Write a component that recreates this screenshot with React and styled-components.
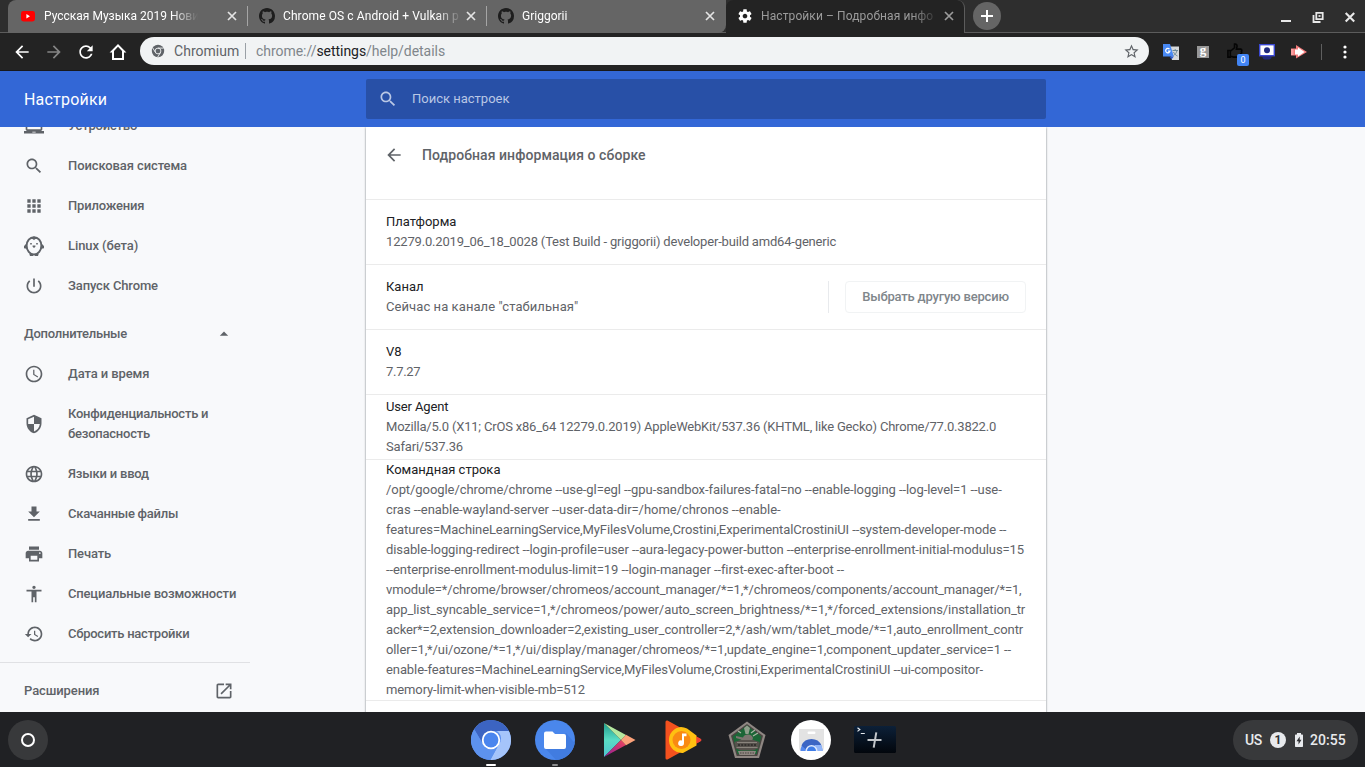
import React from 'react';
import styled, { createGlobalStyle, css } from 'styled-components';

const Global = createGlobalStyle`
  * { box-sizing: border-box; }
  html, body { margin: 0; padding: 0; }
  body { font-family: Roboto, "Noto Sans", sans-serif; font-size: 13px; overflow: hidden; }
  svg { display: block; flex: none; }
`;

const Screen = styled.div`
  width: 1365px;
  height: 767px;
  display: flex;
  flex-direction: column;
  overflow: hidden;
  background: #f8f9fb;
`;

/* ---------- tab strip ---------- */
const TabStrip = styled.div`
  height: 33px;
  flex: none;
  display: flex;
  background: #2e2e2e;
  padding-left: 8px;
  background-image: linear-gradient(#5c5c5c, #5c5c5c);
  background-size: 100% 1px;
  background-repeat: no-repeat;
  background-position: 0 32px;
`;

const InactiveTabs = styled.div`
  display: flex;
  width: 718px;
  height: 33px;
  background: #656565;
  border-radius: 8px 0 8px 0;
`;

const Tab = styled.div`
  width: ${p => (p.$first ? 240 : p.$last ? 238 : 239)}px;
  height: 32px;
  display: flex;
  align-items: center;
  padding: 0 10px 0 ${p => (p.$first ? 12 : 11)}px;
  ${p => p.$divided && css`
    height: 20px;
    margin-top: 6px;
    border-right: 1px solid #a5a5a5;
  `}
  ${p => p.$active && css`
    width: 239px;
    height: 33px;
    padding: 0 10px 1px 11px;
    background: #232323;
    border-right: 1px solid #5c5c5c;
    border-radius: 8px 8px 0 0;
  `}
`;

const TabTitle = styled.div`
  flex: 1;
  margin-left: 8px;
  font-size: 12px;
  line-height: 16px;
  white-space: nowrap;
  overflow: hidden;
  color: ${p => (p.$active ? '#9b9b9b' : '#ffffff')};
  letter-spacing: ${p => p.$track || 0}px;
  mask-image: linear-gradient(90deg, #000 ${p => p.$fade}px, transparent ${p => p.$fade + 26}px);
`;

const NewTab = styled.div`
  width: 28px;
  height: 28px;
  margin: 2px 0 0 8px;
  border-radius: 50%;
  background: #656565;
  display: flex;
  align-items: center;
  justify-content: center;
`;

const WindowControls = styled.div`
  margin-left: auto;
  display: flex;
  align-items: center;
  gap: 16px;
  padding: 1px 7px 0 0;
  height: 32px;
`;

/* ---------- toolbar ---------- */
const Toolbar = styled.div`
  height: 38px;
  flex: none;
  background: #232323;
  border-bottom: 1px solid #18181c;
  display: flex;
  align-items: center;
  padding-left: 12px;
`;

const NavButtons = styled.div`
  display: flex;
  gap: 12px;
  width: 128px;
`;

const Omnibox = styled.div`
  width: 1009px;
  height: 28px;
  margin-top: -1px;
  border-radius: 14px;
  background: #f1f3f4;
  display: flex;
  align-items: center;
  padding: 0 9px 0 11px;
  font-size: 14px;
  color: #80868b;
`;

const Origin = styled.span`
  width: 65px;
  color: #5f6368;
  margin-left: 9px;
  letter-spacing: 0.03px;
`;

const OriginRule = styled.span`
  width: 1px;
  height: 16px;
  background: #9aa0a6;
  margin: 0 10px 0 6px;
`;

const Address = styled.span`
  flex: 1;
  letter-spacing: -0.04px;
  b { font-weight: 400; color: #202124; }
`;

const Extensions = styled.div`
  display: flex;
  align-items: center;
  gap: 16px;
  padding-left: 14px;
  height: 28px;
`;

const ExtensionG = styled.span`
  width: 12px;
  height: 12px;
  margin: 0 2px;
  background: #979797;
  color: #fff;
  font: bold 13px/8px "Liberation Serif", serif;
  text-align: center;
`;

const ThumbWrap = styled.span`
  position: relative;
  width: 16px;
  height: 18px;
`;

const CountBadge = styled.span`
  position: absolute;
  left: 10px;
  top: 11px;
  width: 12px;
  height: 12px;
  border-radius: 2px;
  background: #4285f4;
  color: #fff;
  font-size: 9px;
  line-height: 12px;
  text-align: center;
`;

const ToolbarRule = styled.span`
  width: 1px;
  height: 16px;
  margin: 0 5px 0 -2px;
  background: #5f5f5f;
`;

/* ---------- settings header ---------- */
const Header = styled.header`
  height: 56px;
  flex: none;
  background: #3367d6;
  display: flex;
  align-items: center;
`;

const HeaderTitle = styled.h1`
  margin: 0;
  width: 366px;
  padding-left: 24px;
  font-size: 16px;
  font-weight: 400;
  letter-spacing: 0.2px;
  color: #fff;
`;

const SearchField = styled.div`
  width: 680px;
  height: 40px;
  border-radius: 2px;
  background: #2850a7;
  display: flex;
  align-items: center;
  gap: 14px;
  padding-left: 12px;
  color: #b9c7e5;
`;

const Placeholder = styled.span`
  padding-bottom: 2px;
`;

/* ---------- body ---------- */
const Body = styled.div`
  flex: 1;
  min-height: 0;
  display: flex;
  overflow: hidden;
`;

const Sidebar = styled.nav`
  width: 366px;
  margin-top: -21px;
  color: #5f6368;
  font-weight: 500;
`;

const NavItem = styled.div`
  display: flex;
  align-items: center;
  width: 250px;
  height: ${p => (p.$tall ? 60 : 40)}px;
  padding-left: 24px;
  gap: 24px;
  line-height: 20px;
  white-space: pre;
  letter-spacing: ${p => p.$track}px;
`;

const NavGroup = styled.div`
  display: flex;
  align-items: center;
  justify-content: space-between;
  width: 250px;
  height: 40px;
  margin-top: 8px;
  padding: 0 16px 0 24px;
  line-height: 20px;
  letter-spacing: ${p => p.$track}px;
`;

const NavRule = styled.div`
  width: 250px;
  height: 1px;
  margin-top: 8px;
  background: #e0e1e4;
`;

const Card = styled.main`
  width: 680px;
  height: 600px;
  background: #fff;
  box-shadow: 0 1px 2px rgba(60, 64, 67, 0.5), 0 0 2px rgba(60, 64, 67, 0.25);
`;

const CardHead = styled.div`
  height: 72px;
  display: flex;
  align-items: flex-start;
  padding: 18px 0 0 18px;
  gap: 18px;
  color: #5f6368;
`;

const CardTitle = styled.h2`
  margin: 0;
  font-size: 14px;
  line-height: 21px;
  font-weight: 500;
  letter-spacing: 0.07px;
`;

const Row = styled.section`
  min-height: ${p => (p.$open ? 0 : 65)}px;
  border-top: 1px solid #ebebeb;
  padding: 0 20px;
  display: flex;
  align-items: center;
  line-height: 20px;
  color: #202124;
`;

const RowText = styled.div`
  flex: 1;
`;

const RowTitle = styled.div`
  letter-spacing: ${p => p.$track || 0}px;
`;

const Secondary = styled.div`
  color: #5f6368;
  white-space: pre;
`;

const Line = styled.div`
  letter-spacing: ${p => p.$track || 0}px;
`;

const ButtonRule = styled.div`
  width: 1px;
  height: 32px;
  background: #e8eaed;
  margin-right: 16px;
`;

const OutlineButton = styled.button`
  width: 181px;
  height: 32px;
  padding: 0 0 2px;
  border: 1px solid #f1f3f4;
  border-radius: 4px;
  background: #fff;
  color: #80868b;
  font: 500 13px Roboto, sans-serif;
  letter-spacing: -0.19px;
`;

/* ---------- shelf ---------- */
const Shelf = styled.footer`
  height: 55px;
  flex: none;
  background: #202124;
  display: flex;
  align-items: flex-start;
  justify-content: space-between;
  padding: 8px 7px 0 8px;
`;

const Launcher = styled.div`
  width: 40px;
  height: 40px;
  border-radius: 50%;
  background: #38393b;
  display: flex;
  align-items: center;
  justify-content: center;
`;

const Ring = styled.span`
  width: 14px;
  height: 14px;
  border: 2px solid #fff;
  border-radius: 50%;
`;

const ShelfApps = styled.div`
  display: flex;
  gap: 20px;
  margin-left: 84px;
`;

const ShelfApp = styled.div`
  width: 44px;
  height: 47px;
  display: flex;
  flex-direction: column;
  align-items: center;
  justify-content: space-between;
`;

const Indicator = styled.span`
  width: ${p => p.$w}px;
  height: 2px;
  margin-bottom: 1px;
  border-radius: 1px;
  background: ${p => p.$c};
`;

const Tray = styled.div`
  width: 125px;
  height: 40px;
  border-radius: 20px;
  background: #38393b;
  color: #e8eaed;
  display: flex;
  align-items: center;
  padding-left: 12px;
  font-size: 14px;
`;

const Locale = styled.span`
  width: 17px;
  font-weight: 500;
  letter-spacing: -0.5px;
`;

const TrayCount = styled.span`
  width: 16px;
  height: 16px;
  margin: 0 9px 0 8px;
  border-radius: 50%;
  background: #e8eaed;
  color: #303134;
  font-size: 12px;
  line-height: 16px;
  font-weight: 700;
  text-align: center;
`;

const Clock = styled.span`
  margin-left: 7px;
  font-weight: 500;
  letter-spacing: 0.05px;
`;

/* ---------- icons ---------- */
const Icon = ({ d, size = 20, box = 24, fill = 'currentColor' }) => (
  <svg width={size} height={size} viewBox={`0 0 ${box} ${box}`} fill={fill}>
    <path d={d} fillRule="evenodd" />
  </svg>
);

const P = {
  laptop: 'M20 18c1.1 0 1.99-.9 1.99-2L22 5c0-1.1-.9-2-2-2H4c-1.1 0-2 .9-2 2v11c0 1.1.9 2 2 2H0v3h24v-3h-4zM4 5h16v11H4V5zm6 14h4v.8h-4z',
  search: 'M15.5 14h-.79l-.28-.27C15.41 12.59 16 11.11 16 9.5 16 5.91 13.09 3 9.5 3S3 5.91 3 9.5 5.91 16 9.5 16c1.61 0 3.09-.59 4.23-1.57l.27.28v.79l5 4.99L20.49 19l-4.99-5zm-6 0C7.01 14 5 11.99 5 9.5S7.01 5 9.5 5 14 7.01 14 9.5 11.99 14 9.5 14z',
  apps: 'M4 8h4V4H4v4zm6 12h4v-4h-4v4zm-6 0h4v-4H4v4zm0-6h4v-4H4v4zm6 0h4v-4h-4v4zm6-10v4h4V4h-4zm-6 4h4V4h-4v4zm6 6h4v-4h-4v4zm0 6h4v-4h-4v4z',
  power: 'M13 3h-2v10h2V3zm4.83 2.17l-1.42 1.42C17.99 7.86 19 9.81 19 12c0 3.87-3.13 7-7 7s-7-3.13-7-7c0-2.19 1.01-4.14 2.58-5.42L6.17 5.17C4.23 6.82 3 9.26 3 12c0 4.97 4.03 9 9 9s9-4.03 9-9c0-2.74-1.23-5.18-3.17-6.83z',
  clock: 'M11.99 2C6.47 2 2 6.48 2 12s4.47 10 9.99 10C17.52 22 22 17.52 22 12S17.52 2 11.99 2zM12 20c-4.42 0-8-3.58-8-8s3.58-8 8-8 8 3.58 8 8-3.58 8-8 8zM12.5 7H11v6l5.25 3.15.75-1.23-4.5-2.67V7z',
  shield: 'M12 1L3 5v6c0 5.55 3.84 10.74 9 12 5.16-1.26 9-6.45 9-12V5l-9-4zm0 10.99h7c-.53 4.12-3.28 7.79-7 8.94V12H5V6.3l7-3.11v8.8z',
  globe: 'M11.99 2C6.47 2 2 6.48 2 12s4.47 10 9.99 10C17.52 22 22 17.52 22 12S17.52 2 11.99 2zm6.93 6h-2.95c-.32-1.25-.78-2.45-1.38-3.56 1.84.63 3.37 1.91 4.33 3.56zM12 4.04c.83 1.2 1.48 2.53 1.91 3.96h-3.82c.43-1.43 1.08-2.76 1.91-3.96zM4.26 14C4.1 13.36 4 12.69 4 12s.1-1.36.26-2h3.38c-.08.66-.14 1.32-.14 2 0 .68.06 1.34.14 2H4.26zm.82 2h2.95c.32 1.25.78 2.45 1.38 3.56-1.84-.63-3.37-1.9-4.33-3.56zm2.95-8H5.08c.96-1.66 2.49-2.93 4.33-3.56C8.81 5.55 8.35 6.75 8.03 8zM12 19.96c-.83-1.2-1.48-2.53-1.91-3.96h3.82c-.43 1.43-1.08 2.76-1.91 3.96zM14.34 14H9.66c-.09-.66-.16-1.32-.16-2 0-.68.07-1.35.16-2h4.68c.09.65.16 1.32.16 2 0 .68-.07 1.34-.16 2zm.25 5.56c.6-1.11 1.06-2.31 1.38-3.56h2.95c-.96 1.65-2.49 2.93-4.33 3.56zM16.36 14c.08-.66.14-1.32.14-2 0-.68-.06-1.34-.14-2h3.38c.16.64.26 1.31.26 2s-.1 1.36-.26 2h-3.38z',
  download: 'M19 9h-4V3H9v6H5l7 7 7-7zM5 18v2h14v-2H5z',
  print: 'M19 8H5c-1.66 0-3 1.34-3 3v6h4v4h12v-4h4v-6c0-1.66-1.34-3-3-3zm-3 11H8v-5h8v5zm3-7c-.55 0-1-.45-1-1s.45-1 1-1 1 .45 1 1-.45 1-1 1zm-1-9H6v4h12V3z',
  accessibility: 'M12 2c1.1 0 2 .9 2 2s-.9 2-2 2-2-.9-2-2 .9-2 2-2zm9 7h-6v13h-2v-6h-2v6H9V9H3V7h18v2z',
  restore: 'M13 3c-4.97 0-9 4.03-9 9H1l3.89 3.89.07.14L9 12H6c0-3.87 3.13-7 7-7s7 3.13 7 7-3.13 7-7 7c-1.93 0-3.68-.79-4.94-2.06l-1.42 1.42C8.27 19.99 10.51 21 13 21c4.97 0 9-4.03 9-9s-4.03-9-9-9zm-1 5v5l4.28 2.54.72-1.21-3.5-2.08V8H12z',
  open: 'M19 19H5V5h7V3H5c-1.11 0-2 .9-2 2v14c0 1.1.89 2 2 2h14c1.1 0 2-.9 2-2v-7h-2v7zM14 3v2h3.59l-9.83 9.83 1.41 1.41L19 6.41V10h2V3h-7z',
  back: 'M20 11H7.83l5.59-5.59L12 4l-8 8 8 8 1.41-1.41L7.83 13H20v-2z',
  forward: 'M12 4l-1.41 1.41L16.17 11H4v2h12.17l-5.58 5.59L12 20l8-8z',
  reload: 'M17.65 6.35C16.2 4.9 14.21 4 12 4c-4.42 0-7.99 3.58-7.99 8s3.57 8 7.99 8c3.73 0 6.84-2.55 7.73-6h-2.08c-.82 2.33-3.04 4-5.65 4-3.31 0-6-2.69-6-6s2.69-6 6-6c1.66 0 3.14.69 4.22 1.78L13 11h7V4l-2.35 2.35z',
  star: 'M22 9.24l-7.19-.62L12 2 9.19 8.63 2 9.24l5.46 4.73L5.82 21 12 17.27 18.18 21l-1.63-7.03L22 9.24zM12 15.4l-3.76 2.27 1-4.28-3.32-2.88 4.38-.38L12 6.1l1.71 4.04 4.38.38-3.32 2.88 1 4.28L12 15.4z',
  gear: 'M19.43 12.98c.04-.32.07-.64.07-.98s-.03-.66-.07-.98l2.11-1.65c.19-.15.24-.42.12-.64l-2-3.46c-.12-.22-.39-.3-.61-.22l-2.49 1c-.52-.4-1.08-.73-1.69-.98l-.38-2.65C14.46 2.18 14.25 2 14 2h-4c-.25 0-.46.18-.49.42l-.38 2.65c-.61.25-1.17.59-1.69.98l-2.49-1c-.23-.09-.49 0-.61.22l-2 3.46c-.13.22-.07.49.12.64l2.11 1.65c-.04.32-.07.65-.07.98s.03.66.07.98l-2.11 1.65c-.19.15-.24.42-.12.64l2 3.46c.12.22.39.3.61.22l2.49-1c.52.4 1.08.73 1.69.98l.38 2.65c.03.24.24.42.49.42h4c.25 0 .46-.18.49-.42l.38-2.65c.61-.25 1.17-.59 1.69-.98l2.49 1c.23.09.49 0 .61-.22l2-3.46c.12-.22.07-.49-.12-.64l-2.11-1.65zM12 15.5c-1.93 0-3.5-1.57-3.5-3.5s1.57-3.5 3.5-3.5 3.5 1.57 3.5 3.5-1.57 3.5-3.5 3.5z',
  github: 'M8 0C3.58 0 0 3.58 0 8c0 3.54 2.29 6.53 5.47 7.59.4.07.55-.17.55-.38 0-.19-.01-.82-.01-1.49-2.01.37-2.53-.49-2.69-.94-.09-.23-.48-.94-.82-1.13-.28-.15-.68-.52-.01-.53.63-.01 1.08.58 1.23.82.72 1.21 1.87.87 2.33.66.07-.52.28-.87.51-1.07-1.78-.2-3.64-.89-3.64-3.95 0-.87.31-1.59.82-2.15-.08-.2-.36-1.02.08-2.12 0 0 .67-.21 2.2.82.64-.18 1.32-.27 2-.27s1.36.09 2 .27c1.53-1.04 2.2-.82 2.2-.82.44 1.1.16 1.92.08 2.12.51.56.82 1.27.82 2.15 0 3.07-1.87 3.75-3.65 3.95.29.25.54.73.54 1.48 0 1.07-.01 1.93-.01 2.2 0 .21.15.46.55.38A8.01 8.01 0 0016 8c0-4.42-3.58-8-8-8z',
  home: 'M10 2L1.600 10.600H4V18h12v-7.400h2.400zM10 4.800l4 4.100V16H6V8.900z',
};

const Cross = ({ color = '#e4e4e4' }) => (
  <svg width="10" height="10" viewBox="0 0 10 10" stroke={color} strokeWidth="1.700">
    <path d="M1 1l8 8M9 1l-8 8" />
  </svg>
);

const YouTube = () => (
  <svg width="16" height="16" viewBox="0 0 16 16">
    <rect x="1" y="3" width="14" height="10.400" rx="2.400" fill="#f00" />
    <path d="M6.400 6v4.400L10 8.200z" fill="#fff" />
  </svg>
);

const Penguin = () => (
  <svg width="20" height="20" viewBox="0 0 20 20" fill="none">
    <path d="M2.500 7.500L0 10v2.200l2.500.500zM17.500 7.500L20 10v2.200l-2.500.500z" fill="#5f6368" />
    <ellipse cx="10" cy="9.800" rx="7.400" ry="8.600" stroke="#5f6368" strokeWidth="2" />
    <path d="M6 2.500C8 2.700 9.400 3.200 10 4.200c.6-1 2-1.500 4-1.700L10 .6z" fill="#5f6368" />
    <path d="M5.200 17.500L6 20h3l.5-1.500zM14.800 17.500L14 20h-3l-.5-1.500z" fill="#5f6368" />
    <path d="M8.600 9.500h2.800v1.200L10 11.900l-1.400-1.200z" fill="#5f6368" />
    <path d="M6.200 7h1.600v1.600H6.200zM12.200 7h1.600v1.600h-1.600z" fill="#5f6368" />
  </svg>
);

const MiniChrome = () => (
  <svg width="14" height="14" viewBox="0 0 14 14">
    <circle cx="7" cy="7" r="6.200" fill="#5f6368" />
    <circle cx="7" cy="7" r="2.900" fill="#5f6368" stroke="#f1f3f4" strokeWidth=".9" />
    <path d="M7 4.100h5.600M4.500 8.500L1.700 3.900M9.500 8.500L6.700 13" stroke="#f1f3f4" strokeWidth=".9" />
  </svg>
);

const Translate = () => (
  <svg width="16" height="16" viewBox="0 0 16 16">
    <path d="M6 2.500h10V16H9z" fill="#d5d8da" />
    <path d="M9.500 6.500H15M12.200 5v1.500M14 6.500c-.5 2.500-2 4-3.500 5M10.500 8c1 2 2 3 4 4" stroke="#6d8a96" fill="none" />
    <path d="M0 0h7l3.800 12.500H0z" fill="#4889f4" />
    <path d="M6.500 12.500h4.300L8.500 15.500z" fill="#2a56c6" />
    <path d="M6.500 5.200A2.200 2.200 0 1 0 7 7.200H5" stroke="#fff" strokeWidth="1.200" fill="none" />
  </svg>
);

const Thumb = () => (
  <svg width="16" height="16" viewBox="0 0 17 17" fill="none" stroke="#050505" strokeWidth="1.700">
    <path d="M1 8h2.500v7H1zM4 8.500l4-3.500V1.200c2.200-.5 3 1 2.500 3.200L10 6.500h4.500c1.500.3 1.500 1.800.8 2.300.7 1 .3 2-.5 2.300.3 1-.2 2-1 2.200 0 1-.5 1.700-1.500 1.700H7l-3-1" />
  </svg>
);

const Monitor = () => (
  <svg width="16" height="16" viewBox="0 0 16 16">
    <path d="M3 12.500h10q-1 3-3 3H6q-2 0-3-3z" fill="#1f2a7c" />
    <rect x=".7" y=".7" width="14.600" height="11" fill="#fff" stroke="#3a48d2" strokeWidth="1.400" />
    <circle cx="8" cy="6.200" r="3" fill="#1f2a7c" />
  </svg>
);

const RedArrow = () => (
  <svg width="16" height="16" viewBox="0 0 16 16">
    <path d="M0 4.500h5V1l11 7-11 6.500V11.500H0z" fill="#f47c7c" />
    <path d="M4 5.500h3v-2L13.500 8 7 12.500v-2H4z" fill="#fff" />
    <path d="M0 5h2.500v6H0z" fill="#f9a0a0" />
  </svg>
);

const Dots = () => (
  <svg width="4" height="16" viewBox="0 0 4 16" fill="#fff">
    <circle cx="2" cy="3" r="1.600" /><circle cx="2" cy="8" r="1.600" /><circle cx="2" cy="13" r="1.600" />
  </svg>
);

const ChromiumApp = () => (
  <svg width="40" height="40" viewBox="0 0 40 40">
    <circle cx="20" cy="20" r="20" fill="#5c8fee" />
    <path d="M20 0a20 20 0 0 1 17.900 11H20a9 9 0 0 0-8.300 12.500L3.200 9.200A20 20 0 0 1 20 0z" fill="#3c64c2" />
    <path d="M37.900 11A20 20 0 0 1 19.300 40l8.500-15.500a9 9 0 0 0-2-13.500z" fill="#a5c4fa" />
    <path d="M3.200 9.200A20 20 0 0 0 19.300 40L27.800 24.500 12.200 24.500z" fill="#5d92ee" />
    <circle cx="20" cy="20" r="9.200" fill="#fff" />
    <circle cx="20" cy="20" r="7.400" fill="#4a85ee" />
  </svg>
);

const FilesApp = () => (
  <svg width="40" height="40" viewBox="0 0 40 40">
    <circle cx="20" cy="20" r="20" fill="#4a87ec" />
    <path d="M10 28l11 12a20 20 0 0 0 18.700-17L31 13z" fill="#417ce0" />
    <path d="M11 11.500h6.500l2.500 2.500h9a2 2 0 0 1 2 2v11a2 2 0 0 1-2 2H11a2 2 0 0 1-2-2V13.500a2 2 0 0 1 2-2z" fill="#fff" />
  </svg>
);

const PlayApp = () => (
  <svg width="40" height="40" viewBox="0 0 40 40">
    <defs>
      <linearGradient id="pg" x1="0" y1="0" x2="0" y2="1">
        <stop offset="0" stopColor="#219c8c" /><stop offset=".5" stopColor="#5adcc4" /><stop offset="1" stopColor="#4fc3cf" />
      </linearGradient>
      <linearGradient id="pr" x1="0" y1="1" x2="1" y2="0">
        <stop offset="0" stopColor="#8a1c9a" /><stop offset="1" stopColor="#f0455a" />
      </linearGradient>
    </defs>
    <path d="M5 3v34L22 20z" fill="url(#pg)" />
    <path d="M5 3l22 12L22 20z" fill="#b5e8a0" />
    <path d="M5 37l22-12L22 20z" fill="url(#pr)" />
    <path d="M27 14.800L36.500 20 27 25.200 22 20z" fill="#fba27a" />
  </svg>
);

const MusicApp = () => (
  <svg width="40" height="40" viewBox="0 0 40 40">
    <path d="M2.500 2Q2.500 0 4.500.500L37 18.500q2 1.500 0 3L4.500 39.500Q2.500 40 2.500 38z" fill="#f4511e" />
    <path d="M18 7a13 13 0 1 0 2 26l13.500-7.500V15.500L24 8.500A13 13 0 0 0 18 7z" fill="#ffc011" />
    <circle cx="18.500" cy="20" r="9" fill="#f98a13" />
    <path d="M19 13.500h4.500v2.800H21v6.800a2.900 2.900 0 1 1-2-2.700z" fill="#fff" />
    <path d="M33.500 16.800L38 19q1 1 0 2l-4.500 2.500z" fill="#ef4136" />
  </svg>
);

const TankApp = () => (
  <svg width="40" height="40" viewBox="0 0 40 40">
    <path d="M20 1.500L38.500 15 32 38H8L1.500 15z" fill="#8f8783" />
    <path d="M20 4L36 15.800 30.300 36H9.700L4 15.800z" fill="#4a4542" />
    <path d="M20 5.500L34.300 16.500 29.500 34h-19L5.700 16.500z" fill="#1b6636" />
    <path d="M17 8l3-2.500L23 8l-1.500 6h-3z" fill="#8fa08c" />
    <path d="M24 13l4-3M26 16l5-3M14 13l-3-2" stroke="#a9b5a4" strokeWidth="1.300" />
    <path d="M9 16l7 1.500q1-3 5-3t5 3.500l-1 3H15l-1-1.500-5-1.500z" fill="#7b756f" />
    <path d="M7.500 22l6-2h13l6 2-1.500 6.500-5 2H14l-5-2z" fill="#57524d" />
    <path d="M10 22.500h20M9.500 27.500h21" stroke="#8a847d" strokeWidth="1" />
    <path d="M11 25h18" stroke="#2b2927" strokeWidth="1.600" strokeDasharray="2 1.200" />
    <path d="M11 31h18l-1.500 4h-15z" fill="#8e8781" />
    <path d="M13 33h14" stroke="#4a4542" strokeWidth="1.200" strokeDasharray="1.500 1" />
  </svg>
);

const StoreApp = () => (
  <svg width="40" height="40" viewBox="0 0 40 40">
    <circle cx="20" cy="20" r="20" fill="#fff" />
    <path d="M8 9h25v17q0 5-2 5H10q-2 0-2-5z" fill="#e3e3e3" />
    <rect x="16.500" y="11.500" width="8" height="2.500" rx="1.200" fill="#fff" />
    <path d="M9.500 31a11 11 0 1 1 22 0z" fill="#5488ee" />
    <path d="M10.500 25.500A11 11 0 0 1 30.500 25.500H20a6 6 0 0 0-5 4z" fill="#3c66c4" />
    <path d="M30.300 25q1.200 3 1.200 6H24q1.500-3-.5-6z" fill="#91b5f8" />
    <path d="M14.500 31a6 6 0 0 1 12 0z" fill="#dfe9fc" />
    <path d="M16 31a4.500 4.500 0 0 1 9 0z" fill="#3f7de8" />
  </svg>
);

const TerminalApp = () => (
  <svg width="42" height="40" viewBox="0 0 42 40">
    <defs>
      <linearGradient id="tm" x1="0" y1="0" x2="0" y2="1">
        <stop offset="0" stopColor="#0c2038" /><stop offset="1" stopColor="#02060c" />
      </linearGradient>
    </defs>
    <rect x="0" y="6" width="42" height="27" rx="1.500" fill="url(#tm)" />
    <path d="M3.500 7.800l2.300 1.800-2.300 1.800M6.800 13.500h4" stroke="#e6eaee" strokeWidth="1.200" fill="none" />
    <path d="M13.500 20h14M22.300 12.300l-2.600 15.400" stroke="#c3c7cb" strokeWidth="2" />
  </svg>
);

const Battery = () => (
  <svg width="8" height="14" viewBox="0 0 8 14">
    <path d="M2 0h4v1.500h1.300q.7 0 .7.700v11q0 .8-.7.800H.700Q0 14 0 13.200v-11q0-.7.700-.7H2z" fill="#e8eaed" />
    <path d="M4.700 3.500L1.500 8.300h2v3.200l3-4.800h-1.800z" fill="#303134" />
  </svg>
);

/* ---------- data ---------- */
const tabs = [
  { icon: <YouTube />, title: 'Русская Музыка 2019 Нови', fade: 128 },
  { icon: <Icon d={P.github} size={16} box={16} fill="#1d1d1d" />, title: 'Chrome OS с Android + Vulkan p', fade: 153, track: 0.09 },
  { icon: <Icon d={P.github} size={16} box={16} fill="#1d1d1d" />, title: 'Griggorii', fade: 154 },
];

const primary = [
  ['Устройство', P.laptop, -0.2],
  ['Поисковая система', P.search, -0.1],
  ['Приложения', P.apps, -0.18],
  ['Linux (бета)', null, -0.08],
  ['Запуск Chrome', P.power, -0.13],
];

const advanced = [
  ['Дата и время', P.clock, -0.1],
  ['Конфиденциальность и\nбезопасность', P.shield, -0.24],
  ['Языки и ввод', P.globe, -0.2],
  ['Скачанные файлы', P.download, -0.27],
  ['Печать', P.print, -0.15],
  ['Специальные возможности', P.accessibility, -0.18],
  ['Сбросить настройки', P.restore, -0.25],
];

const commandLine = [
  ['/opt/google/chrome/chrome --use-gl=egl --gpu-sandbox-failures-fatal=no --enable-logging --log-level=1 --use-', -0.07],
  ['cras --enable-wayland-server --user-data-dir=/home/chronos --enable-', -0.045],
  ['features=MachineLearningService,MyFilesVolume,Crostini,ExperimentalCrostiniUI --system-developer-mode --', -0.09],
  ['disable-logging-redirect --login-profile=user --aura-legacy-power-button --enterprise-enrollment-initial-modulus=15', -0.09],
  ['--enterprise-enrollment-modulus-limit=19 --login-manager --first-exec-after-boot --', -0.07],
  ['vmodule=*/chrome/browser/chromeos/account_manager/*=1,*/chromeos/components/account_manager/*=1,', -0.137],
  ['app_list_syncable_service=1,*/chromeos/power/auto_screen_brightness/*=1,*/forced_extensions/installation_tr', -0.078],
  ['acker*=2,extension_downloader=2,existing_user_controller=2,*/ash/wm/tablet_mode/*=1,auto_enrollment_contr', -0.105],
  ['oller=1,*/ui/ozone/*=1,*/ui/display/manager/chromeos/*=1,update_engine=1,component_updater_service=1 --', -0.117],
  ['enable-features=MachineLearningService,MyFilesVolume,Crostini,ExperimentalCrostiniUI --ui-compositor-', -0.09],
  ['memory-limit-when-visible-mb=512', -0.12],
];

const userAgent = [
  ['Mozilla/5.0 (X11; CrOS x86_64 12279.0.2019) AppleWebKit/537.36 (KHTML, like Gecko) Chrome/77.0.3822.0', -0.197],
  ['Safari/537.36', -0.18],
];

const Detail = ({ title, track, lines, open, children }) => (
  <Row $open={open}>
    <RowText>
      <RowTitle $track={track}>{title}</RowTitle>
      <Secondary>
        {lines.map(([text, t]) => <Line key={text} $track={t}>{text}</Line>)}
      </Secondary>
    </RowText>
    {children}
  </Row>
);

const apps = [
  { icon: <ChromiumApp />, bar: [10, '#ffffff'] },
  { icon: <FilesApp />, bar: [6, '#8a8b8d'] },
  { icon: <PlayApp /> },
  { icon: <MusicApp /> },
  { icon: <TankApp /> },
  { icon: <StoreApp /> },
  { icon: <TerminalApp /> },
];

export default function App() {
  return (
    <Screen>
      <Global />
      <TabStrip>
        <InactiveTabs>
          {tabs.map((t, i) => (
            <Tab key={t.title} $first={i === 0} $last={i === 2} $divided={i < 2}>
              {t.icon}
              <TabTitle $fade={t.fade} $track={t.track}>{t.title}</TabTitle>
              <Cross />
            </Tab>
          ))}
        </InactiveTabs>
        <Tab $active>
          <Icon d={P.gear} size={16} fill="#fff" />
          <TabTitle $active $fade={152} $track={0.1}>Настройки – Подробная инфо</TabTitle>
          <Cross color="#9b9b9b" />
        </Tab>
        <NewTab>
          <svg width="12" height="12" viewBox="0 0 12 12" stroke="#fff" strokeWidth="2"><path d="M6 0v12M0 6h12" /></svg>
        </NewTab>
        <WindowControls>
          <svg width="16" height="16" viewBox="0 0 16 16"><path d="M3 11h10v2H3z" fill="#e8e8e8" /></svg>
          <svg width="16" height="16" viewBox="0 0 16 16" fill="none" stroke="#e8e8e8" strokeWidth="1.800">
            <path d="M6.300 3.800h6.400v6.400H6.300zM3.500 6v7h7" /><path d="M8.500 7h2" />
          </svg>
          <svg width="16" height="16" viewBox="0 0 16 16" stroke="#e8e8e8" strokeWidth="2.100"><path d="M3.700 4l8.500 8.500M12.200 4l-8.500 8.500" /></svg>
        </WindowControls>
      </TabStrip>

      <Toolbar>
        <NavButtons>
          <Icon d={P.back} fill="#fff" />
          <Icon d={P.forward} fill="#858585" />
          <Icon d={P.reload} fill="#fff" />
          <Icon d={P.home} box={20} fill="#fff" />
        </NavButtons>
        <Omnibox>
          <MiniChrome />
          <Origin>Chromium</Origin>
          <OriginRule />
          <Address>chrome://<b>settings</b>/help/details</Address>
          <Icon d={P.star} size={17} fill="#5f6368" />
        </Omnibox>
        <Extensions>
          <Translate />
          <ExtensionG>g</ExtensionG>
          <ThumbWrap><Thumb /><CountBadge>0</CountBadge></ThumbWrap>
          <Monitor />
          <RedArrow />
          <ToolbarRule />
          <Dots />
        </Extensions>
      </Toolbar>

      <Header>
        <HeaderTitle>Настройки</HeaderTitle>
        <SearchField>
          <Icon d={P.search} />
          <Placeholder>Поиск настроек</Placeholder>
        </SearchField>
      </Header>

      <Body>
        <Sidebar>
          {primary.map(([label, d, track]) => (
            <NavItem key={label} $track={track}>{d ? <Icon d={d} /> : <Penguin />}{label}</NavItem>
          ))}
          <NavGroup $track={-0.25}>
            Дополнительные
            <Icon d="M7 14l5-5 5 5z" />
          </NavGroup>
          {advanced.map(([label, d, track]) => (
            <NavItem key={label} $track={track} $tall={label.includes('\n')}><Icon d={d} />{label}</NavItem>
          ))}
          <NavRule />
          <NavGroup $track={-0.1}>
            Расширения
            <Icon d={P.open} />
          </NavGroup>
        </Sidebar>
        <Card>
          <CardHead>
            <Icon d={P.back} />
            <CardTitle>Подробная информация о сборке</CardTitle>
          </CardHead>
          <Detail title="Платформа" lines={[['12279.0.2019_06_18_0028 (Test Build - griggorii) developer-build amd64-generic', -0.18]]} />
          <Detail title="Канал" lines={[['Сейчас на канале "стабильная"', 0.08]]}>
            <ButtonRule />
            <OutlineButton>Выбрать другую версию</OutlineButton>
          </Detail>
          <Detail title="V8" lines={[['7.7.27', -0.3]]} />
          <Detail title="User Agent" track={-0.15} lines={userAgent} />
          <Detail title="Командная строка" lines={commandLine} open />
          <Row />
        </Card>
      </Body>

      <Shelf>
        <Launcher><Ring /></Launcher>
        <ShelfApps>
          {apps.map((a, i) => (
            <ShelfApp key={i}>
              {a.icon}
              {a.bar && <Indicator $w={a.bar[0]} $c={a.bar[1]} />}
            </ShelfApp>
          ))}
        </ShelfApps>
        <Tray>
          <Locale>US</Locale>
          <TrayCount>1</TrayCount>
          <Battery />
          <Clock>20:55</Clock>
        </Tray>
      </Shelf>
    </Screen>
  );
}
